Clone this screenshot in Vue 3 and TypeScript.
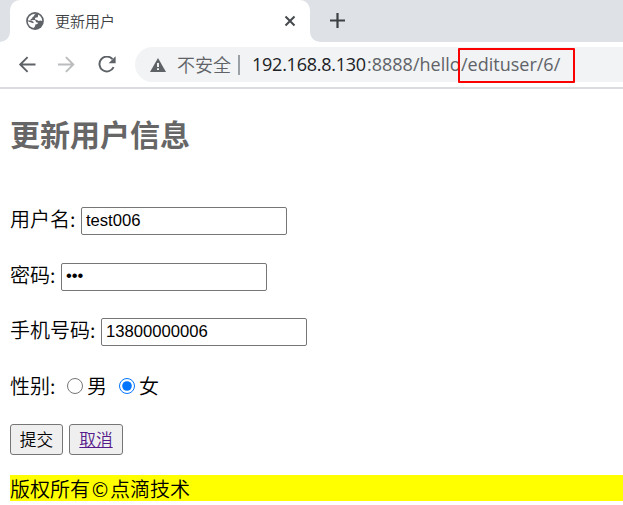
<script setup lang="ts">
import { ref } from 'vue'

const username = ref<string>('test006')
const password = ref<string>('123')
const phone = ref<string>('13800000006')
const gender = ref<'male' | 'female'>('female')
</script>

<template>
  <div class="browser">
    <div class="strip">
      <div class="strip-left"></div>
      <div class="tab-back">
        <div class="tab">
          <svg class="globe" width="18" height="18" viewBox="0 0 18 18">
            <circle cx="9" cy="9" r="8.9" fill="#5f6368" />
            <path d="M10 1.8C8.6 2.3 7.9 3.1 8.1 4.3C6.7 4.7 6.2 5.3 6.2 6.6L4.6 7L4.8 8.2L8.2 8.1C9.5 8.3 10 9.1 9.9 10.2L11.7 10.4C12.2 11.3 11.6 12 10.4 12.2L9.3 12.5L9.1 14.3L7.6 16C3.9 15.4 1.9 12.5 1.8 9.3L7.2 11.2L7.8 10L5.2 8.6L1.9 8.5C2.3 4.5 5.5 1.7 10 1.8Z" fill="#fff" />
            <path d="M12.2 2.6C14.8 3.9 16.2 6.3 16.2 9.1L14.2 8.5L12.6 9.1L11 7.9L9.2 7.5L8.9 6.1L10.3 5.4L11.8 5.2Z" fill="#fff" />
          </svg>
          <span class="tab-title">更新用户</span>
          <svg class="close" width="12" height="12" viewBox="0 0 12 12">
            <path d="M1.5 1.5L10.5 10.5M10.5 1.5L1.5 10.5" stroke="#45494d" stroke-width="2" />
          </svg>
        </div>
      </div>
      <div class="strip-right">
        <svg width="15" height="15" viewBox="0 0 15 15">
          <path d="M7.5 0V15M0 7.5H15" stroke="#3c4043" stroke-width="2.2" />
        </svg>
      </div>
    </div>

    <div class="toolbar">
      <svg class="nav" width="18" height="17" viewBox="0 .5 18 17">
        <path d="M17.5 9H2.5M9.6 1.6L2.2 9L9.6 16.4" fill="none" stroke="#5f6368" stroke-width="1.9" />
      </svg>
      <svg class="nav" width="18" height="17" viewBox="0 .5 18 17">
        <path d="M0 9H15M7.9 1.6L15.3 9L7.9 16.4" fill="none" stroke="#babcbe" stroke-width="1.9" />
      </svg>
      <svg class="nav" width="18" height="17" viewBox="0 .5 18 17">
        <path d="M14.5 3.7A7.4 7.4 0 1 0 15.6 11.6" fill="none" stroke="#5f6368" stroke-width="2" />
        <path d="M17.6 .8V7.8H10.6Z" fill="#5f6368" />
      </svg>
      <div class="omnibox">
        <svg width="16" height="14" viewBox="0 0 16 14">
          <path d="M8 0L16 14H0Z" fill="#5f6368" />
          <path d="M7.1 5H8.9V9H7.1ZM7.1 10.3H8.9V12H7.1Z" fill="#fff" />
        </svg>
        <span class="insecure">不安全</span>
        <span class="divider"></span>
        <span class="url"><span class="host">192.168.8.130</span><span class="port">:8888/hello</span><span class="path">/edituser/6/<i class="marker"></i></span></span>
      </div>
    </div>

    <main class="page">
      <h1>更新用户信息</h1>
      <form @submit.prevent>
        <label class="row first"><span>用户名:</span><input v-model="username" type="text"></label>
        <label class="row"><span>密码:</span><input v-model="password" type="password"></label>
        <label class="row"><span>手机号码:</span><input v-model="phone" type="text"></label>
        <div class="row genders">
          <span>性别:</span>
          <label><input v-model="gender" type="radio" value="male">男</label>
          <label><input v-model="gender" type="radio" value="female">女</label>
        </div>
        <div class="buttons">
          <button type="submit">提交</button>
          <button type="button" class="cancel"><span>取消</span></button>
        </div>
      </form>
      <footer>版权所有<span class="copy">©</span>点滴技术</footer>
    </main>
  </div>
</template>

<style>
body {
  overflow: hidden;
  background: #fff;
}
</style>

<style scoped>
* {
  box-sizing: border-box;
}
.browser {
  height: 505px;
  overflow: hidden;
  font-family: "Noto Sans CJK SC", sans-serif;
  font-weight: 350;
  background: #fff;
}
svg {
  display: block;
  flex: none;
}
.strip {
  display: flex;
  height: 42px;
}
.strip-left {
  width: 10px;
  background: #dee1e6;
  border-bottom-right-radius: 10px;
}
.tab-back {
  width: 300px;
  background: linear-gradient(#dee1e6 20px, #fff 20px);
}
.tab {
  display: flex;
  align-items: center;
  height: 42px;
  padding: 0 14px 0 16px;
  background: #fff;
  border-radius: 10px 10px 0 0;
}
.tab-title {
  flex: 1;
  margin-left: 11px;
  font-size: 15px;
  line-height: 20px;
  color: #3c4043;
}
.strip-right {
  flex: 1;
  padding: 13px 0 0 20px;
  background: #dee1e6;
  border-bottom-left-radius: 10px;
}
.toolbar {
  display: flex;
  align-items: center;
  height: 47px;
  padding: 0 0 0 18px;
  border-bottom: 2px solid #dadce0;
}
.nav {
  margin-right: 22px;
}
.nav:nth-child(3) {
  margin-right: 19px;
}
.omnibox {
  display: flex;
  flex: 1;
  align-items: center;
  height: 35px;
  padding-left: 15px;
  background: #f1f3f4;
  border-radius: 18px 0 0 18px;
}
.insecure {
  margin-left: 11px;
  padding-bottom: 2px;
  font-size: 18px;
  line-height: 26px;
  color: #5f6368;
}
.divider {
  width: 2px;
  height: 20px;
  margin: 0 12px 0 7px;
  background: #9aa0a6;
}
.url {
  display: flex;
  padding-bottom: 2px;
  font-family: "Open Sans", "Noto Sans", sans-serif;
  font-size: 18px;
  font-weight: 400;
  line-height: 26px;
  color: #5f6368;
  white-space: nowrap;
}
.host {
  width: 115px;
  letter-spacing: -.25px;
  color: #202124;
}
.port {
  width: 94px;
}
.path {
  position: relative;
}
.marker {
  position: absolute;
  top: -3px;
  left: -3px;
  width: 117px;
  height: 35px;
  border: 2px solid #fa0000;
  border-radius: 1px;
}
.page {
  padding: 21px 0 0 10px;
  font-size: 20px;
  line-height: 26px;
  color: #000;
}
h1 {
  margin: 0;
  font-size: 30px;
  font-weight: 700;
  line-height: 46px;
  color: #666;
}
.row {
  display: flex;
  align-items: flex-start;
  height: 28px;
  margin-bottom: 27.5px;
}
.row > span {
  line-height: 24px;
}
.first {
  margin-top: 51px;
}
.row input:not([type="radio"]) {
  width: 206px;
  height: 28px;
  margin: 0 0 0 5.5px;
  padding: 1px 4px 2px;
  border: 1px solid #767676;
  border-radius: 2px;
  outline: none;
  background: #fff;
  font-family: "Liberation Sans", sans-serif;
  font-size: 16.67px;
  color: #000;
}
.genders {
  margin-bottom: 0;
}
.genders label {
  display: flex;
  align-items: center;
  margin-left: 11.5px;
  line-height: 24px;
}
.genders label + label {
  margin-left: 12px;
}
.genders input {
  width: 16px;
  height: 16px;
  margin: 0 4px 0 0;
}
.buttons {
  display: flex;
  gap: 6px;
  margin-top: 22px;
}
button {
  width: 53px;
  height: 31px;
  padding: 0;
  border: 1px solid #767676;
  border-radius: 3px;
  background: #efefef;
  font-family: inherit;
  font-size: 16.67px;
  font-weight: inherit;
  line-height: 24px;
  color: #000;
}
.cancel {
  width: 54px;
  color: #551a8b;
  text-decoration: underline;
}
footer {
  height: 26px;
  margin-top: 20px;
  line-height: 27px;
  background: #ff0;
}
.copy {
  display: inline-block;
  width: 20px;
  text-align: center;
}
</style>
